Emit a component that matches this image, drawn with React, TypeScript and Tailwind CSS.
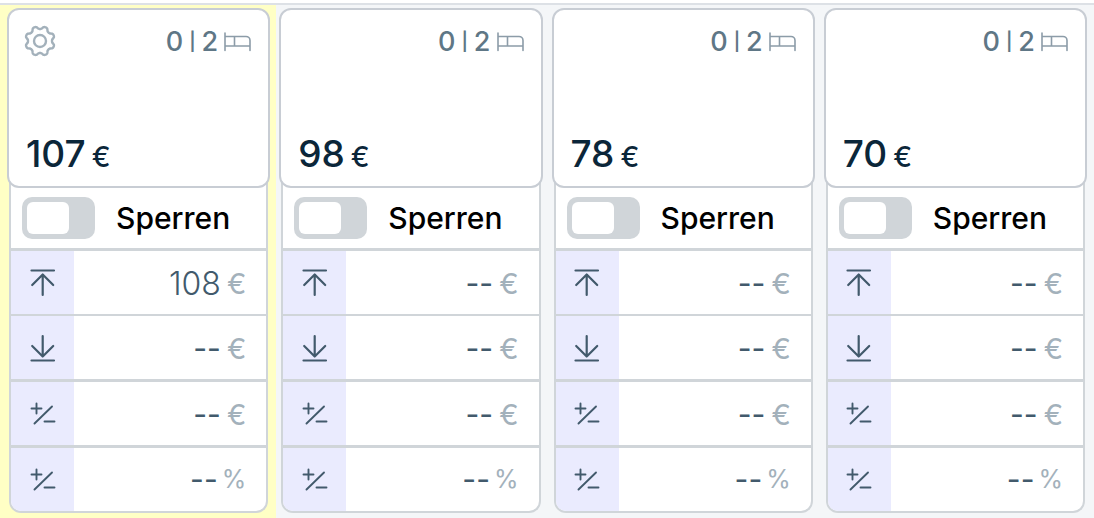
import { useState } from 'react'
import clsx from 'clsx'

type Day = { id: string; price: number; sold: number; rooms: number; max?: string; active?: boolean }

const days: Day[] = [
  { id: 'd1', price: 107, sold: 0, rooms: 2, max: '108', active: true },
  { id: 'd2', price: 98, sold: 0, rooms: 2 },
  { id: 'd3', price: 78, sold: 0, rooms: 2 },
  { id: 'd4', price: 70, sold: 0, rooms: 2 },
]

export default function App() {
  return (
    <main className="min-h-screen bg-white pt-[3px] font-['Inter',sans-serif]">
      <div className="grid min-h-[515px] grid-cols-4 gap-[9px] border-t-2 border-[#dde1e6] bg-[#f4f6f8] px-[7px]">
        {days.map(d => <DayColumn key={d.id} day={d} />)}
      </div>
    </main>
  )
}

function DayColumn({ day }: { day: Day }) {
  const [locked, setLocked] = useState(false)
  return (
    <section className={clsx('pt-[3px] pb-[5px]', day.active && '-mr-[6px] -ml-[7px] bg-[#ffffc5] pr-[6px] pl-[7px]')}>
      <div className="relative flex h-[180px] flex-col justify-between rounded-xl border-2 border-[#c8cdd4] bg-white px-4 pt-[15px] pb-[10px]">
        <div className="-ml-px flex h-8 items-center justify-between">
          {day.active ? <button aria-label="Einstellungen" className="text-[#a3b1bb]"><GearIcon /></button> : <span />}
          <div className="flex items-center gap-[6px] pt-[2px] text-[27px] leading-8 font-medium text-[#5f7786]">
            <span>{day.sold}</span>
            <span className="text-[18px] leading-8 font-semibold">|</span>
            <span>{day.rooms}</span>
            <BedIcon />
          </div>
        </div>
        <div className="flex items-baseline gap-[6px] pl-px font-medium text-[#0b2639]">
          <span className="text-[37px] leading-[44px]">{day.price}</span>
          <span className="text-[28px] leading-8">€</span>
        </div>
      </div>
      <div className="-mt-3 mx-[2px] overflow-hidden rounded-b-xl border-2 border-t-0 border-[#d0d5d9] bg-white">
        <label className="flex h-[72px] items-center gap-[21px] px-[11px] pt-3 text-[30px] font-medium text-black">
          <input
            type="checkbox"
            role="switch"
            checked={locked}
            onChange={e => setLocked(e.target.checked)}
            className="h-[42px] w-[73px] shrink-0 appearance-none rounded-[10px] bg-[#d0d5d9] p-[5px] before:block before:h-8 before:w-[42px] before:rounded-md before:bg-white checked:bg-[#425a6c] checked:before:ml-auto"
          />
          Sperren
        </label>
        <PriceRow label="Höchstpreis" unit="€" value={day.max} className="border-t-3" icon={<MaxIcon />} />
        <PriceRow label="Mindestpreis" unit="€" className="border-t-2" icon={<MinIcon />} />
        <PriceRow label="Anpassung in Euro" unit="€" className="border-t-3" icon={<PlusMinusIcon />} />
        <PriceRow label="Anpassung in Prozent" unit="%" className="border-t-3" icon={<PlusMinusIcon />} />
      </div>
    </section>
  )
}

function PriceRow({ label, unit, value, icon, className }: { label: string; unit: string; value?: string; icon: React.ReactNode; className: string }) {
  return (
    <label className={clsx('flex border-[#d0d5d9]', className)}>
      <span className="flex h-[63px] w-[63px] shrink-0 items-center justify-center bg-[#eaebfe] text-[#425a6c]">{icon}</span>
      <span className={clsx('flex min-w-0 flex-1 items-center pr-5', unit === '%' ? 'gap-1' : 'gap-[6px] pt-[2px]')}>
        <input
          aria-label={label}
          defaultValue={value}
          placeholder="--"
          inputMode="decimal"
          className="h-10 w-0 min-w-0 flex-1 bg-transparent text-right text-[32px] font-[350] text-[#425a6c] outline-none placeholder:text-[#425a6c] placeholder-shown:text-[30px] placeholder-shown:font-normal"
        />
        <span className={clsx('font-normal text-[#a3b1bb]', unit === '%' ? 'text-[25px]' : 'text-[29px]')}>{unit}</span>
      </span>
    </label>
  )
}

// eight rounded teeth around the hub
const gearPath = Array.from({ length: 96 }, (_, i) => {
  const a = (i / 96) * Math.PI * 2
  const r = 13.4 + 1.5 * Math.tanh(-1.6 * Math.cos(a * 8))
  return `${i ? 'L' : 'M'}${(17 + r * Math.cos(a)).toFixed(2)} ${(17 + r * Math.sin(a)).toFixed(2)}`
}).join('') + 'Z'

function GearIcon() {
  return (
    <svg width="32" height="32" viewBox="1 1 32 32" fill="none" stroke="currentColor" strokeWidth="2.4" strokeLinejoin="round">
      <path d={gearPath} />
      <circle cx="17" cy="17" r="6" />
    </svg>
  )
}

function BedIcon() {
  return (
    <svg width="28" height="20" viewBox="0 0 28 20" fill="none" stroke="#8c9ca8" strokeWidth="1.6" strokeLinecap="round">
      <path d="M1 1v17.500M1 4.500h21a4 4 0 0 1 4 4v10M1 14h25M10.500 4.500v9" />
    </svg>
  )
}

function MaxIcon() {
  return (
    <svg width="26" height="30" viewBox="0 0 26 30" fill="none" stroke="currentColor" strokeWidth="2.2" strokeLinecap="round" strokeLinejoin="round">
      <path d="M1.500 2.500h22.500M12.700 27V6.500M2.200 17 12.700 6.500 23.200 17" />
    </svg>
  )
}

function MinIcon() {
  return (
    <svg width="26" height="30" viewBox="0 0 26 30" fill="none" stroke="currentColor" strokeWidth="2.2" strokeLinecap="round" strokeLinejoin="round">
      <path d="M1.500 27.500h22.500M12.700 3v20.500M2.200 13 12.700 23.500 23.200 13" />
    </svg>
  )
}

function PlusMinusIcon() {
  return (
    <svg width="26" height="24" viewBox="0 0 26 24" fill="none" stroke="currentColor" strokeWidth="1.9" strokeLinecap="round">
      <path d="M1.500 6.500h10M6.500 1.500v10M4.500 21.500 22 4.500M14.500 19.500h10" />
    </svg>
  )
}
